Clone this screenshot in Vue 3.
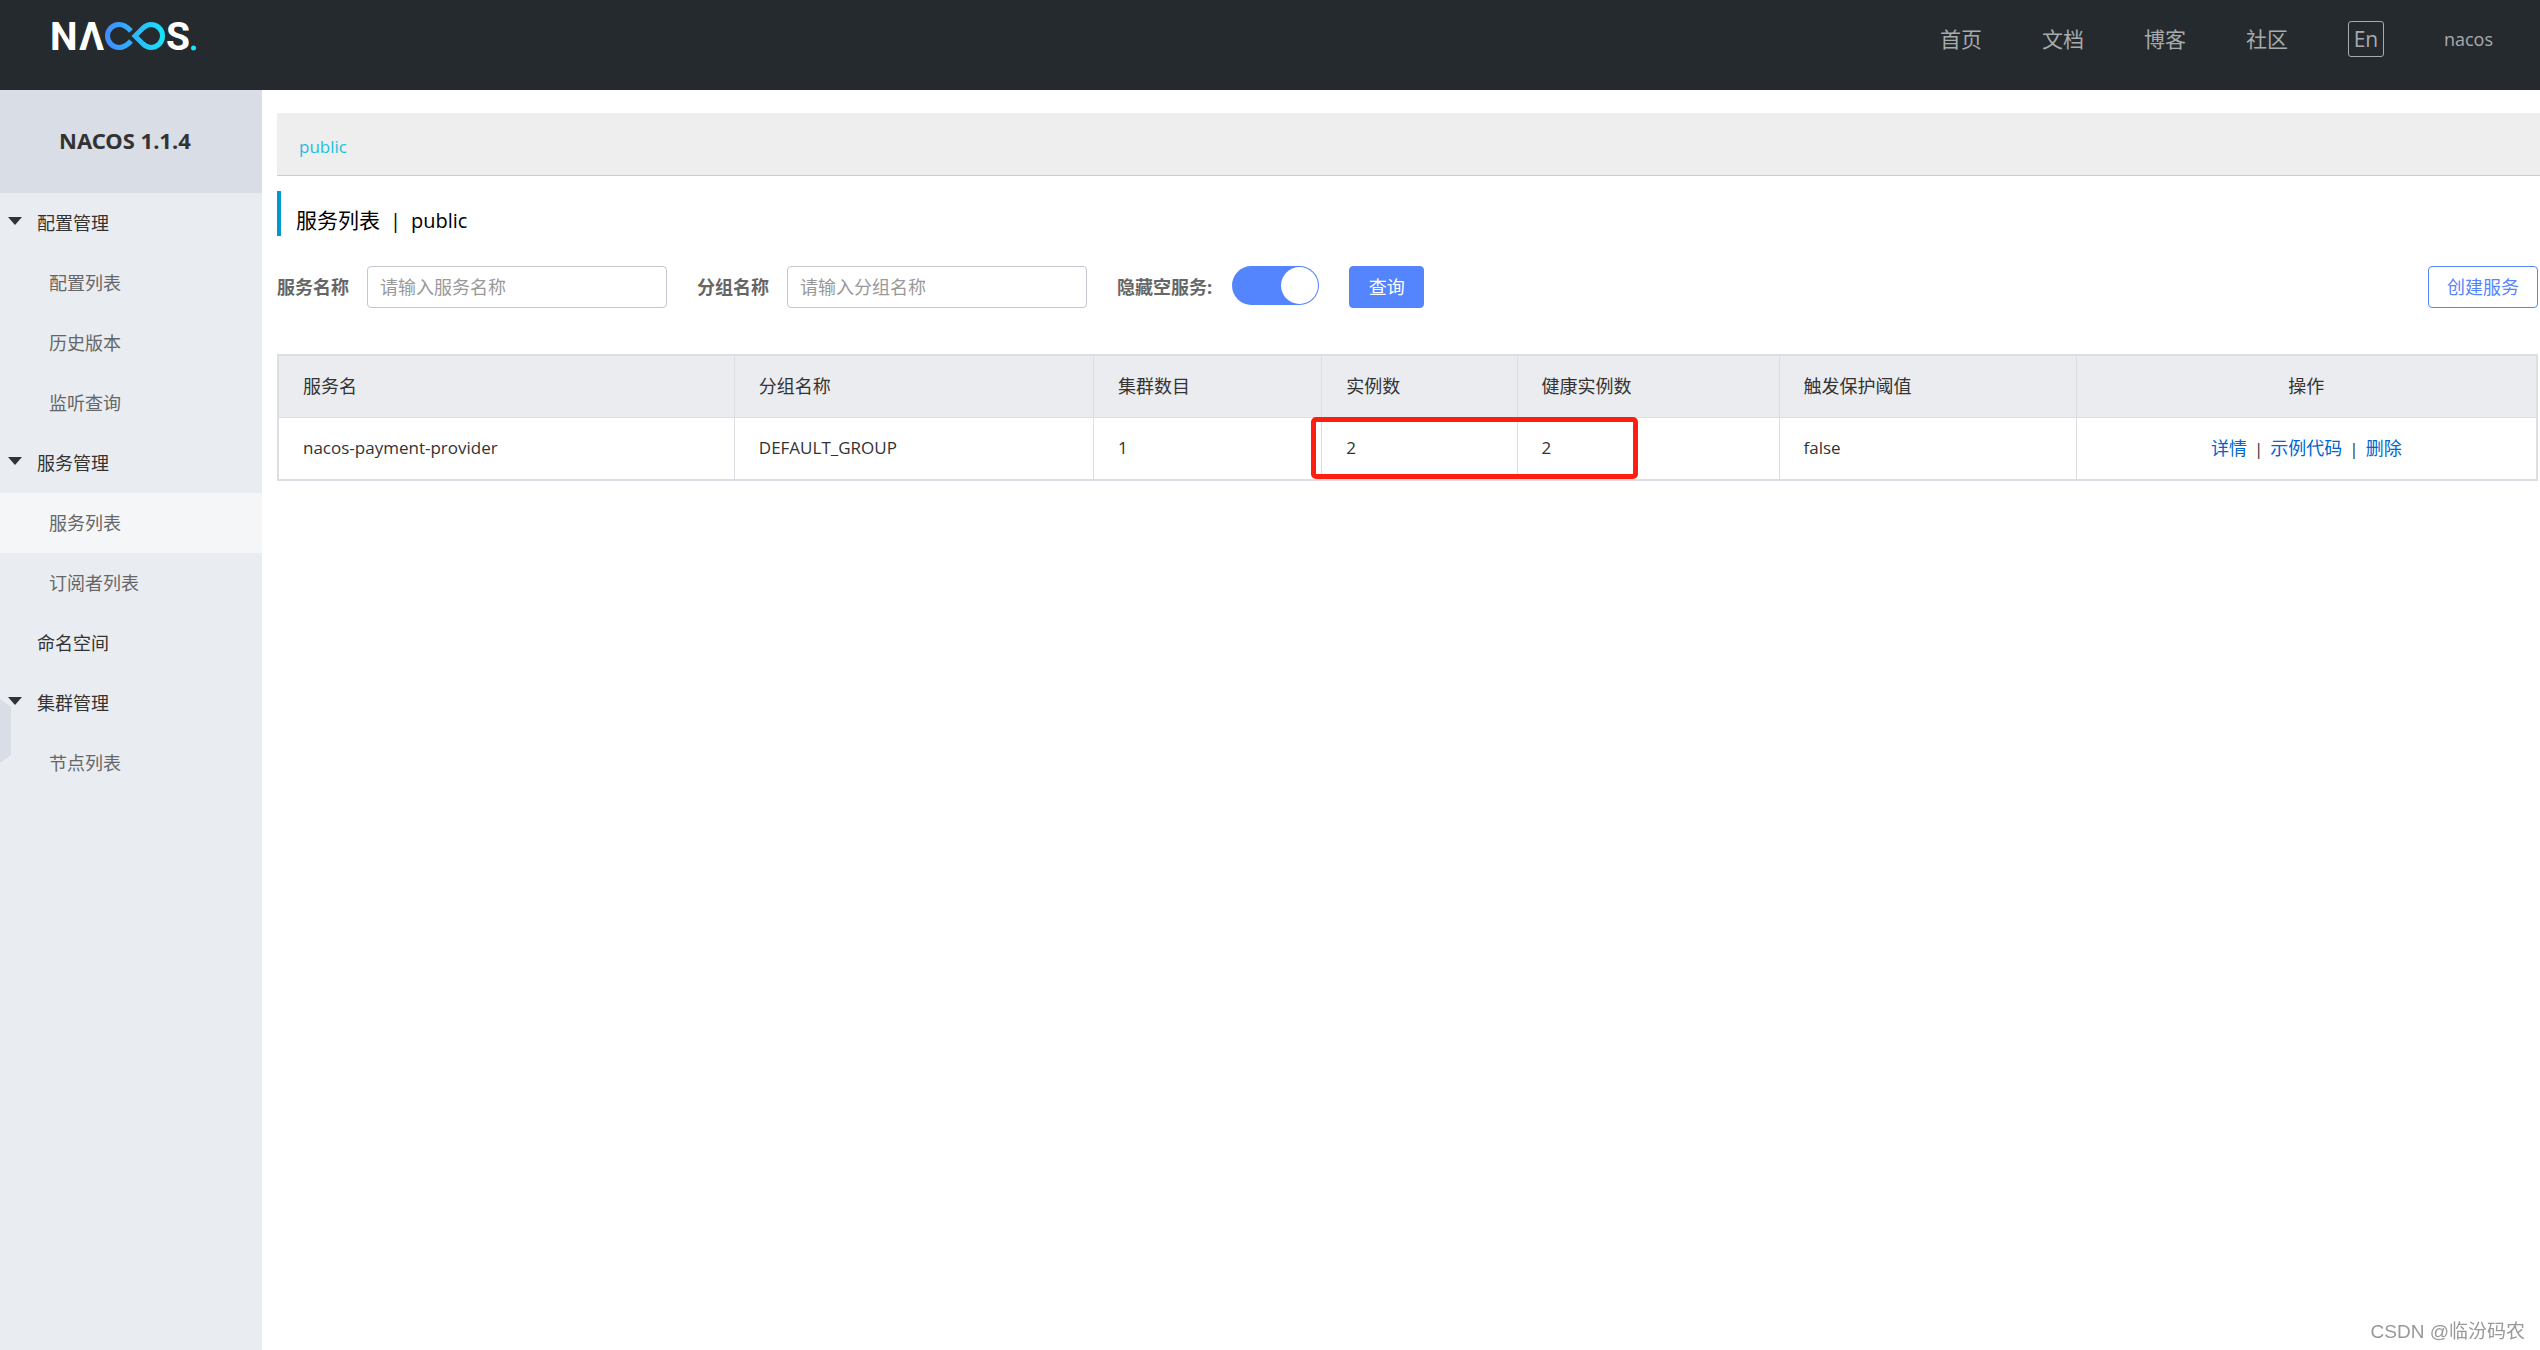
<script setup>
import { ref } from 'vue'

const navLinks = ['首页', '文档', '博客', '社区']

const menu = [
  { label: '配置管理', open: true, children: ['配置列表', '历史版本', '监听查询'] },
  { label: '服务管理', open: true, children: ['服务列表', '订阅者列表'] },
  { label: '命名空间', children: [] },
  { label: '集群管理', open: true, children: ['节点列表'] },
]
const active = '服务列表'

const serviceName = ref('')
const groupName = ref('')
const hideEmpty = ref(true)

const services = [
  { name: 'nacos-payment-provider', group: 'DEFAULT_GROUP', clusters: 1, instances: 2, healthy: 2, threshold: 'false' },
]
</script>

<template>
  <div class="page">
    <header class="topbar">
      <a class="logo" href="#" aria-label="NACOS">
        <svg width="160" height="72" viewBox="44 0 160 72">
          <defs>
            <linearGradient id="loop" gradientUnits="userSpaceOnUse" x1="105" y1="0" x2="165" y2="0">
              <stop offset="0" stop-color="#4489ff" />
              <stop offset="1" stop-color="#17e5f8" />
            </linearGradient>
          </defs>
          <g class="letters">
            <text x="50" y="50">N</text>
            <text x="79" y="50">Λ</text>
            <text x="166" y="50">S</text>
          </g>
          <g fill="none" stroke="url(#loop)" stroke-width="5">
            <path d="M131 31C127 26.500 123 24.500 119 24.500A11.500 11.500 0 0 0 119 47.500C123 47.500 127 45.500 131 41" />
            <path d="M135 36L143 28Q147 24.500 151 24.500A11.500 11.500 0 0 1 151 47.500Q147 47.500 143 44Z" />
          </g>
          <circle cx="193.500" cy="48" r="2.500" fill="#17e5f8" />
        </svg>
      </a>
      <nav class="nav">
        <a v-for="link in navLinks" :key="link" href="#">{{ link }}</a>
        <button class="lang" type="button">En</button>
        <a class="user" href="#">nacos</a>
      </nav>
    </header>

    <div class="body">
      <aside class="sidebar">
        <h1 class="version">NACOS 1.1.4</h1>
        <ul class="menu">
          <li v-for="group in menu" :key="group.label">
            <a class="item parent" href="#">
              <span class="caret" :class="{ open: group.open }"></span>{{ group.label }}
            </a>
            <ul v-if="group.children.length" class="menu">
              <li v-for="child in group.children" :key="child">
                <a class="item child" :class="{ active: child === active }" href="#">{{ child }}</a>
              </li>
            </ul>
          </li>
        </ul>
        <div class="handle"></div>
      </aside>

      <main class="content">
        <div class="namespaces"><a href="#">public</a></div>
        <h2 class="title"><span>服务列表</span><span class="latin">|</span><span class="latin">public</span></h2>

        <form class="filters" @submit.prevent>
          <div class="field">
            <label for="service">服务名称</label>
            <input id="service" v-model="serviceName" class="text" type="text" placeholder="请输入服务名称" />
          </div>
          <div class="field">
            <label for="group">分组名称</label>
            <input id="group" v-model="groupName" class="text" type="text" placeholder="请输入分组名称" />
          </div>
          <div class="field toggle">
            <label for="hide">隐藏空服务:</label>
            <input id="hide" v-model="hideEmpty" class="switch" type="checkbox" />
          </div>
          <button class="btn primary" type="submit">查询</button>
          <button class="btn create" type="button">创建服务</button>
        </form>

        <div class="table-wrap">
          <table>
            <colgroup>
              <col class="c-name" /><col class="c-group" /><col class="c-cluster" /><col class="c-inst" />
              <col class="c-healthy" /><col class="c-threshold" /><col />
            </colgroup>
            <thead>
              <tr>
                <th>服务名</th><th>分组名称</th><th>集群数目</th><th>实例数</th>
                <th>健康实例数</th><th>触发保护阈值</th><th class="ops">操作</th>
              </tr>
            </thead>
            <tbody>
              <tr v-for="s in services" :key="s.name">
                <td>{{ s.name }}</td>
                <td>{{ s.group }}</td>
                <td>{{ s.clusters }}</td>
                <td>{{ s.instances }}</td>
                <td>{{ s.healthy }}</td>
                <td>{{ s.threshold }}</td>
                <td class="ops">
                  <a href="#">详情</a><span class="sep">|</span><a href="#">示例代码</a><span class="sep">|</span><a href="#">删除</a>
                </td>
              </tr>
            </tbody>
          </table>
          <div class="highlight"></div>
        </div>
      </main>
    </div>

    <div class="watermark">CSDN @临汾码农</div>
  </div>
</template>

<style>
body {
  margin: 0;
  background: #fff;
}
</style>

<style scoped>
* {
  box-sizing: border-box;
}
.page {
  display: flex;
  flex-direction: column;
  min-height: 100vh;
  font-family: "Open Sans", "Noto Sans CJK SC", sans-serif;
  font-size: 18px;
  line-height: 24px;
  color: #333;
}
a {
  color: inherit;
  text-decoration: none;
}
button,
input {
  font: inherit;
}
.topbar {
  display: flex;
  justify-content: space-between;
  align-items: flex-start;
  height: 90px;
  padding: 0 47px 0 44px;
  background: #252a2f;
  border-bottom: 1px solid #2a2530;
}
.logo svg {
  display: block;
}
.letters {
  font-family: Roboto, sans-serif;
  font-size: 39px;
  font-weight: 700;
  fill: #fff;
}
.nav {
  display: flex;
  align-items: center;
  gap: 60px;
  height: 78px;
  color: #a8aaac;
  font-size: 21px;
}
.lang {
  width: 36px;
  height: 36px;
  padding: 0;
  border: 1px solid #a8aaac;
  border-radius: 3px;
  background: none;
  color: inherit;
  line-height: 28px;
}
.nav .user {
  font-size: 18px;
}
.body {
  display: flex;
  flex: 1;
}
.sidebar {
  position: relative;
  flex: none;
  width: 262px;
  background: #e9edf2;
}
.version {
  margin: 0;
  height: 103px;
  padding-left: 59px;
  background: #d9dde5;
  font-family: "Noto Sans", sans-serif;
  font-size: 22px;
  font-weight: 700;
  line-height: 101px;
}
.menu {
  margin: 0;
  padding: 0;
  list-style: none;
}
.item {
  display: flex;
  align-items: center;
  height: 60px;
}
.parent {
  padding-left: 8px;
}
.caret {
  width: 14px;
  height: 8px;
  margin: 0 15px 4px 0;
}
.caret.open {
  background: #333;
  clip-path: polygon(0 0, 100% 0, 50% 100%);
}
.child {
  padding-left: 49px;
  color: #666;
}
.child.active {
  background: #f4f6f8;
}
.handle {
  position: absolute;
  left: 0;
  top: 609px;
  width: 11px;
  height: 64px;
  background: #d9dde5;
  clip-path: polygon(0 0, 100% 8px, 100% 56px, 0 100%);
}
.content {
  flex: 1;
  min-width: 0;
  padding: 23px 2px 0 15px;
}
.namespaces {
  height: 63px;
  margin-right: -2px;
  padding-left: 22px;
  background: #eee;
  border-bottom: 1px solid #ccc;
  color: #1bbfe0;
  font-size: 17px;
  line-height: 67px;
}
.title {
  display: flex;
  gap: 10px;
  height: 45px;
  margin: 15px 0 30px;
  padding-left: 15px;
  border-left: 4px solid #09c;
  color: #000;
  font-size: 21px;
  font-weight: 400;
  line-height: 59px;
}
.title .latin {
  font-size: 20px;
}
.filters {
  display: flex;
  align-items: flex-start;
  gap: 30px;
  margin-bottom: 46px;
}
.field {
  display: flex;
  gap: 18px;
}
.toggle {
  gap: 20px;
}
.field label {
  color: #666;
  font-weight: 700;
  line-height: 42px;
}
.text {
  width: 300px;
  height: 42px;
  padding: 0 12px;
  border: 1px solid #c4c6cf;
  border-radius: 4px;
  background: #fff;
  color: #333;
  outline: none;
}
.text::placeholder {
  color: #999;
  opacity: 1;
}
.switch {
  appearance: none;
  width: 87px;
  height: 39px;
  margin: 0;
  border-radius: 20px;
  background: #c4c6cf;
}
.switch::before {
  content: "";
  display: block;
  width: 37px;
  height: 37px;
  margin: 1px;
  border-radius: 50%;
  background: #fff;
}
.switch:checked {
  background: #5584ff;
}
.switch:checked::before {
  margin-left: 49px;
}
.btn {
  min-width: 75px;
  height: 42px;
  padding: 0 18px;
  border: 1px solid #5584ff;
  border-radius: 4px;
  line-height: 38px;
}
.primary {
  background: #5584ff;
  color: #fff;
}
.create {
  margin-left: auto;
  background: #fff;
  color: #5584ff;
}
.table-wrap {
  position: relative;
}
table {
  width: 100%;
  table-layout: fixed;
  border-collapse: collapse;
  border: 2px solid #dcdee3;
}
.c-name { width: 20.200%; }
.c-group { width: 15.900%; }
.c-cluster { width: 10.100%; }
.c-inst { width: 8.650%; }
.c-healthy { width: 11.600%; }
.c-threshold { width: 13.150%; }
th,
td {
  height: 62px;
  padding: 0 24px;
  border: 1px solid #dcdee3;
  font-weight: 400;
  text-align: left;
}
th {
  background: #ebecf0;
}
td {
  height: 63px;
  font-size: 17px;
}
.ops {
  text-align: center;
}
.ops a {
  color: #06c;
  font-size: 18px;
}
.sep {
  margin: 0 7px;
}
.highlight {
  position: absolute;
  top: 63px;
  left: 45.750%;
  width: 14.450%;
  height: 62px;
  border: 5px solid #ff1e10;
  border-radius: 5px;
}
.watermark {
  position: fixed;
  right: 15px;
  bottom: 6px;
  color: #999;
  font-family: "Liberation Sans", "Noto Sans CJK SC", sans-serif;
  font-size: 19px;
}
</style>
